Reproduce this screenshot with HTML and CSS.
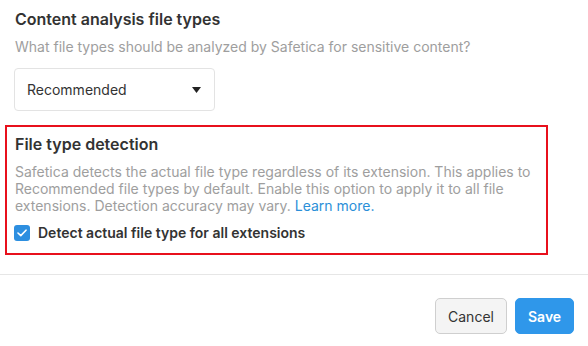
FILE: index.html
```html
<!DOCTYPE html>
<html lang="en">
<head>
  <meta charset="UTF-8">
  <meta name="viewport" content="width=device-width, initial-scale=1.0">
  <title>File types</title>
  <link rel="stylesheet" href="styles.css">
</head>
<body>
  <div class="content">
    <div class="section">
      <h3>Content analysis file types</h3>
      <p class="hint">What file types should be analyzed by Safetica for sensitive content?</p>
      <div class="select">
        <span>Recommended</span>
        <svg class="caret" width="9" height="6" viewBox="0 0 9 6"><path d="M0 0 H9 L4.5 6 Z" fill="#222"/></svg>
      </div>
    </div>

    <div class="section highlight">
      <h3>File type detection</h3>
      <p class="hint">Safetica detects the actual file type regardless of its extension. This applies to Recommended file types by default. Enable this option to apply it to all file extensions. Detection accuracy may vary. <a href="#">Learn more.</a></p>
      <label class="check">
        <span class="box">
          <svg width="10" height="8" viewBox="0 0 10 8"><path d="M1 4 L3.8 6.6 L9 1.2" fill="none" stroke="#fff" stroke-width="1.6" stroke-linecap="round" stroke-linejoin="round"/></svg>
        </span>
        Detect actual file type for all extensions
      </label>
    </div>
  </div>

  <footer>
    <button class="btn cancel">Cancel</button>
    <button class="btn save">Save</button>
  </footer>
</body>
</html>
```

FILE: styles.css
```css
body {
  font-family: 'Inter', 'Noto Sans', sans-serif;
  margin: 0;
  padding: 0;
  background-color: #ffffff;
  color: #333;
  width: 588px;
}
.content {
  padding: 0 40px 19px 5px;
}
.section {
  padding: 9px 10px 0 10px;
}
.section h3 {
  margin: 0;
  font-size: 16px;
  line-height: 20px;
  font-weight: 600;
  color: #333;
}
.hint {
  margin: 9px 0 0;
  font-size: 14px;
  line-height: 17px;
  color: #9e9e9e;
}
.hint a {
  color: #2b8fd8;
  text-decoration: none;
}
.select {
  margin: 13px 0 0 -1px;
  height: 41px;
  border: 1px solid #e3e3e3;
  border-radius: 4px;
  display: flex;
  align-items: center;
  justify-content: space-between;
  padding: 0 13px 0 12px;
  box-sizing: content-box;
  width: 174px;
  font-size: 14px;
  color: #333;
}
.caret {
  margin-top: 1px;
}
.highlight {
  margin-top: 14px;
  border: 2px solid #e8101c;
  padding: 7px 8px 12px 8px;
}
.highlight .hint {
  margin-top: 9px;
}
.check {
  display: flex;
  align-items: center;
  gap: 8px;
  margin-top: 10px;
  font-size: 14px;
  font-weight: 600;
  color: #333;
  margin-left: -1px;
}
.box {
  width: 16px;
  height: 16px;
  border-radius: 3px;
  background-color: #2d8fe0;
  display: flex;
  align-items: center;
  justify-content: center;
}
footer {
  border-top: 1px solid #e6e6e6;
  display: flex;
  justify-content: flex-end;
  gap: 8px;
  padding: 23px 14px 0 0;
}
.btn {
  font-family: 'Inter', 'Noto Sans', sans-serif;
  font-size: 14px;
  height: 36px;
  border-radius: 5px;
  padding: 0 12px;
  cursor: pointer;
}
.cancel {
  background-color: #f4f4f4;
  border: 1px solid #cfcfcf;
  color: #333;
  width: 72px;
}
.save {
  background-color: #2f97ea;
  border: 1px solid #2f97ea;
  color: #fff;
  font-weight: 600;
  width: 59px;
}
```
